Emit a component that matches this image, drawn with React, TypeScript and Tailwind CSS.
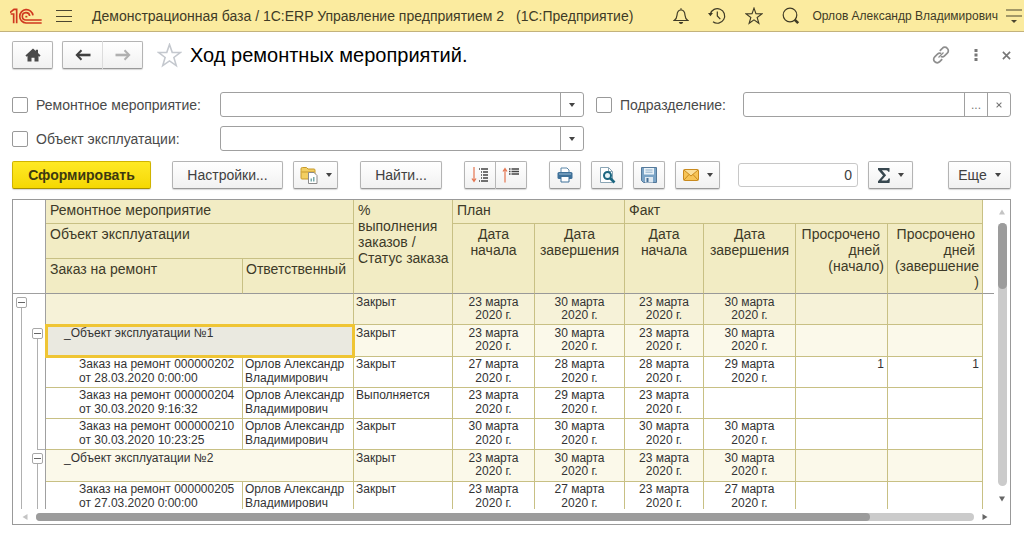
import type { ReactNode } from 'react';
import clsx from 'clsx';

type Level = 'total' | 'object' | 'order';

interface ReportRow {
  id: string;
  level: Level;
  title: string[];
  owner?: string[];
  status: string;
  dates: string[];
  overdue?: string;
  selected?: boolean;
  lastInGroup?: boolean;
}

const OWNER = ['Орлов Александр', 'Владимирович'];

const ROWS: ReportRow[] = [
  {
    id: 'total',
    level: 'total',
    title: [],
    status: 'Закрыт',
    dates: ['23 марта', '30 марта', '23 марта', '30 марта'],
  },
  {
    id: 'object-1',
    level: 'object',
    title: ['_Объект эксплуатации №1'],
    status: 'Закрыт',
    dates: ['23 марта', '30 марта', '23 марта', '30 марта'],
    selected: true,
  },
  {
    id: 'order-202',
    level: 'order',
    title: ['Заказ на ремонт 000000202', 'от 28.03.2020 0:00:00'],
    owner: OWNER,
    status: 'Закрыт',
    dates: ['27 марта', '28 марта', '28 марта', '29 марта'],
    overdue: '1',
  },
  {
    id: 'order-204',
    level: 'order',
    title: ['Заказ на ремонт 000000204', 'от 30.03.2020 9:16:32'],
    owner: OWNER,
    status: 'Выполняется',
    dates: ['23 марта', '29 марта', '23 марта', ''],
  },
  {
    id: 'order-210',
    level: 'order',
    title: ['Заказ на ремонт 000000210', 'от 30.03.2020 10:23:25'],
    owner: OWNER,
    status: 'Закрыт',
    dates: ['30 марта', '30 марта', '30 марта', '30 марта'],
    lastInGroup: true,
  },
  {
    id: 'object-2',
    level: 'object',
    title: ['_Объект эксплуатации №2'],
    status: 'Закрыт',
    dates: ['23 марта', '30 марта', '23 марта', '30 марта'],
  },
  {
    id: 'order-205',
    level: 'order',
    title: ['Заказ на ремонт 000000205', 'от 27.03.2020 0:00:00'],
    owner: OWNER,
    status: 'Закрыт',
    dates: ['23 марта', '27 марта', '23 марта', '27 марта'],
  },
];

const ROW_BG: Record<Level, string> = {
  total: 'bg-[#f6f2d8]',
  object: 'bg-[#fbf9ea]',
  order: 'bg-white',
};

/* ---------- icons ---------- */

function Logo() {
  return (
    <svg viewBox="0 0 96 48" className="h-4 w-8" fill="none" stroke="#d0391f" strokeWidth="5">
      <path d="M0 14 12 4h8v42" />
      <path d="M2 18h9v28" />
      <path d="M69 22A20 20 0 1 0 48 45H95" />
      <path d="M59 24A11 11 0 1 0 48 36H95" />
      <path d="M46 26h6" />
    </svg>
  );
}

function MenuIcon() {
  return (
    <svg viewBox="0 0 16 14" className="h-[14px] w-4" stroke="#4b4630" strokeWidth="1">
      <path d="M0 1.5h16M0 7.5h16M0 12.5h16" />
    </svg>
  );
}

function BellIcon() {
  return (
    <svg viewBox="0 0 16 18" className="h-[18px] w-4" fill="none" stroke="#3f3b26" strokeWidth="1.2">
      <path d="M8 1.2v1.6M1.2 13.5c2-1.4 2.6-2.6 2.8-5.3C4.2 4.8 5.6 3 8 3s3.8 1.8 4 5.2c.2 2.7.8 3.9 2.8 5.3z" />
      <path d="M5.8 15h4.4c-.3 1.3-1.2 2-2.2 2s-1.9-.7-2.2-2z" fill="#3f3b26" stroke="none" />
    </svg>
  );
}

function HistoryIcon() {
  return (
    <svg viewBox="0 0 18 18" className="size-[18px]" fill="none" stroke="#3f3b26" strokeWidth="1.2">
      <path d="M2.3 7A7.3 7.3 0 1 1 5 14.8" />
      <path d="M9.3 4.5V9l3 3.2" />
      <path d="M0 6h5L2.4 9.3z" fill="#3f3b26" stroke="none" />
    </svg>
  );
}

function StarIcon({ className, stroke }: { className: string; stroke: string }) {
  return (
    <svg viewBox="0 0 24 24" className={className} fill="none" stroke={stroke} strokeWidth="1.5">
      <path d="M12 1.5l2.6 7.5 8 .1-6.4 4.8 2.3 7.8L12 17.2l-6.5 4.5 2.3-7.8L1.4 9.1l8-.1z" />
    </svg>
  );
}

function SearchIcon() {
  return (
    <svg viewBox="0 0 18 18" className="size-[18px]" fill="none" stroke="#3f3b26">
      <circle cx="8" cy="8" r="6.8" strokeWidth="1.2" />
      <path d="M12.6 12.6l3.6 3.6" strokeWidth="2.6" />
    </svg>
  );
}

function PanelIcon() {
  return (
    <svg viewBox="0 0 16 16" className="size-4" stroke="#4b4630" fill="#4b4630">
      <path d="M0 2h16M0 8h16" strokeWidth="1.2" />
      <path d="M5 12h6l-3 3z" stroke="none" />
    </svg>
  );
}

function HomeIcon() {
  return (
    <svg viewBox="0 0 16 14" className="h-[14px] w-4" fill="#4a4a4a">
      <path d="M8 .5.4 7.4l1.3 1.3.8-.7v5.5h4V9.8h3v3.7h4V8l.8.700 1.300-1.300L13 5V1.800h-2.200V3z" />
    </svg>
  );
}

function ArrowIcon({ className }: { className?: string }) {
  return (
    <svg viewBox="0 0 16 12" className={clsx('h-3 w-4', className)} fill="none" stroke="currentColor">
      <path d="M2 6h13.5" strokeWidth="2.6" />
      <path d="M6.5 1.2 1.8 6l4.7 4.8" strokeWidth="2" />
    </svg>
  );
}

function LinkIcon() {
  return (
    <svg viewBox="0 0 18 18" className="size-[18px]" fill="none" stroke="#8e8e8e" strokeWidth="1.7">
      <path d="M7.8 4.8 10.300 2.300a3.400 3.400 0 0 1 5 0 3.400 3.400 0 0 1 0 4.900l-2.800 2.700a3.400 3.400 0 0 1-3.700.6" />
      <path d="M10.200 13.200l-2.500 2.500a3.400 3.400 0 0 1-5 0 3.400 3.400 0 0 1 0-4.900l2.800-2.700a3.400 3.400 0 0 1 3.700-.6" />
      <path d="M6.5 11.5l5-5" strokeWidth="1.3" />
    </svg>
  );
}

function DotsIcon() {
  return (
    <svg viewBox="0 0 4 12" className="h-3 w-1" fill="#777">
      <path d="M.5 0h3v3h-3zM.5 4.5h3v3h-3zM.5 9h3v3h-3z" />
    </svg>
  );
}

function CrossIcon({ className }: { className: string }) {
  return (
    <svg viewBox="0 0 10 10" className={className} stroke="#777" strokeWidth="1.8">
      <path d="M1 1l8 8M9 1 1 9" />
    </svg>
  );
}

function Caret() {
  return (
    <svg viewBox="0 0 6 4" className="h-1 w-[6px]" fill="#444">
      <path d="M0 0h6L3 4z" />
    </svg>
  );
}

function VariantsIcon() {
  return (
    <svg viewBox="0 0 18 18" className="size-[18px]">
      <path d="M1 4.5V2.8Q1 1.5 2.5 1.5h4L8 3h6q1 0 1 1v9H2q-1 0-1-1z" fill="#f3cf62" stroke="#c79a2c" />
      <path d="M1.5 6h13" stroke="#c79a2c" />
      <path d="M8.5 6.5h5.5l3 3v8H8.5z" fill="#fff" stroke="#8b8b8b" />
      <path d="M10.5 15.5v-3H12v3zM13 15.5V11h1.5v4.5z" fill="#7aa" />
    </svg>
  );
}

function ExpandIcon() {
  return (
    <svg viewBox="0 0 18 16" className="h-4 w-[18px]" fill="none">
      <path d="M3 0v14M1 11.5 3 14.5l2-3" stroke="#e4744f" strokeWidth="1.2" />
      <path d="M8 2h1M10 2h7M10 5h1M12 5h5M10 8h1M12 8h5M10 11h1M12 11h5M8 14h1M10 14h7" stroke="#444" strokeWidth="1.5" />
    </svg>
  );
}

function CollapseIcon() {
  return (
    <svg viewBox="0 0 18 16" className="h-4 w-[18px]" fill="none">
      <path d="M3 15.5v-14M1 4.5 3 1.5l2 3" stroke="#e4744f" strokeWidth="1.2" />
      <path d="M7 2h1.5M9.5 2H17M7 4.500h1.500M9.500 4.500H17M7 7h1.500M9.500 7H17" stroke="#444" strokeWidth="1.5" />
    </svg>
  );
}

function PrinterIcon() {
  return (
    <svg viewBox="0 0 18 16" className="h-4 w-[18px]">
      <path d="M5 5V1h6l2 2v2" fill="#fff" stroke="#5b86a8" />
      <rect x="1.5" y="5" width="15" height="7" rx="1.5" fill="#3f7199" />
      <path d="M3 7h12" stroke="#9bbdd6" />
      <path d="M5 9.5h8V15H5z" fill="#fff" stroke="#3f7199" />
    </svg>
  );
}

function PreviewIcon() {
  return (
    <svg viewBox="0 0 18 18" className="size-[18px]" fill="none">
      <path d="M2.5 1.5h8l4 4v11h-12z" fill="#fff" stroke="#8aa5b5" />
      <path d="M10.5 1.5v4h4" stroke="#8aa5b5" />
      <circle cx="9.5" cy="9.5" r="3.5" fill="#e6f3f7" stroke="#1a6580" strokeWidth="2" />
      <path d="M12 12l4.5 4.5" stroke="#1a6580" strokeWidth="2.6" />
    </svg>
  );
}

function SaveIcon() {
  return (
    <svg viewBox="0 0 16 16" className="size-4">
      <path d="M.5.5h15v15h-13l-2-2z" fill="#7ba4c6" stroke="#54799a" />
      <path d="M3 1h10v6.5H3z" fill="#eaf2f8" />
      <path d="M4.5 3h7M4.5 5.2h7" stroke="#8fb0ca" />
      <path d="M4 10h8v5.5H4z" fill="#dfe9f1" />
      <path d="M5.5 11h2v4h-2z" fill="#466f94" />
    </svg>
  );
}

function MailIcon() {
  return (
    <svg viewBox="0 0 16 12" className="h-3 w-4" fill="none" stroke="#c98a1e">
      <rect x=".5" y=".5" width="15" height="11" rx="1" fill="#f7c456" />
      <path d="M1 1l7 6 7-6" fill="#fbdf9a" />
      <path d="M1 11l5-5.5M15 11l-5-5.5" />
    </svg>
  );
}

function SigmaIcon() {
  return (
    <svg viewBox="0 0 12 15" className="h-[15px] w-3" fill="#37474f">
      <path d="M0 0h11.5v3.8h-1.3Q10 2.2 8.3 2.2H3.9l4.2 5-4.6 5.300h5q1.600 0 2-1.900H12L11.500 15H0v-1.700l5-5.700L0 1.700z" />
    </svg>
  );
}

function ScrollArrow({ className, d }: { className: string; d: string }) {
  return (
    <svg viewBox="0 0 6 6" className={clsx('size-[6px] shrink-0', className)} fill="currentColor">
      <path d={d} />
    </svg>
  );
}

/* ---------- controls ---------- */

function ToolButton({
  label,
  className,
  children,
}: {
  label?: string;
  className?: string;
  children: ReactNode;
}) {
  return (
    <button
      type="button"
      aria-label={label}
      className={clsx(
        'flex h-7 shrink-0 items-center justify-center gap-2 rounded-[2px] border border-[#b4b4b4] border-b-[#999] bg-linear-to-b from-white to-[#f1f1f1] text-sm text-[#404040] shadow-[0_1px_1px_#d8d8d8]',
        className,
      )}
    >
      {children}
    </button>
  );
}

function FilterLabel({ id, className, children }: { id: string; className?: string; children: ReactNode }) {
  return (
    <div className={clsx('flex items-center gap-2', className)}>
      <input
        id={id}
        type="checkbox"
        className="size-4 shrink-0 appearance-none rounded-[2px] border border-[#999] bg-white"
      />
      <label htmlFor={id} className="text-sm whitespace-nowrap text-[#4a4a4a]">
        {children}
      </label>
    </div>
  );
}

function FilterField({ label, children }: { label: string; children: ReactNode }) {
  return (
    <div className="flex h-[25px] min-w-0 overflow-hidden rounded-[3px] border border-[#a0a0a0] bg-white">
      <input type="text" aria-label={label} className="min-w-0 flex-1 px-2 text-sm outline-none" />
      {children}
    </div>
  );
}

function FieldButton({ label, children }: { label: string; children: ReactNode }) {
  return (
    <button
      type="button"
      aria-label={label}
      className="flex w-[23px] shrink-0 items-center justify-center border-l border-[#a0a0a0] text-xs text-[#777]"
    >
      {children}
    </button>
  );
}

/* ---------- report table ---------- */

function Toggle() {
  return (
    <button
      type="button"
      aria-label="Свернуть"
      className="flex size-[11px] shrink-0 items-center justify-center rounded-[2px] border border-[#a8a8a8] bg-white"
    >
      <span className="h-px w-[7px] bg-[#666]" />
    </button>
  );
}

function TreeCell({ level, last }: { level: Level; last?: boolean }) {
  return (
    <td className="border-r border-[#a0a0a0] bg-white p-0">
      <div className={clsx('flex', level === 'object' ? 'h-8' : 'h-[31px]')}>
        <div className="flex w-4 flex-col items-center">
          {level === 'total' && <div className="h-[3px]" />}
          {level === 'total' && <Toggle />}
          <div className="w-px flex-1 bg-[#b0b0b0]" />
        </div>
        <div className="flex w-4 flex-col items-center">
          {level === 'object' && <div className="h-[3px]" />}
          {level === 'object' && <Toggle />}
          {level !== 'total' && <div className="w-px flex-1 bg-[#b0b0b0]" />}
          {last && <div className="ml-2 h-px w-2 bg-[#b0b0b0]" />}
        </div>
      </div>
    </td>
  );
}

function Lines({ items }: { items: string[] }) {
  return (
    <>
      {items.map((line) => (
        <div key={line} className="whitespace-nowrap">
          {line}
        </div>
      ))}
    </>
  );
}

const CELL = 'border-r border-b border-[#c8c084] align-top';
const HEAD = 'border-r border-b bg-[#f2ecc4] pt-[2px] align-top font-normal';
const HEAD_INNER = 'border-[#c8c084]';
const HEAD_LAST = 'border-r-[#c8c084] border-b-[#999]';

function ReportHead() {
  return (
    <thead className="text-sm leading-4 text-[#3d3a28]">
      <tr className="h-6">
        <td rowSpan={3} className="border-r border-b border-[#a0a0a0] bg-white" />
        <th colSpan={2} className={clsx(HEAD, HEAD_INNER, 'pl-1 text-left')}>
          Ремонтное мероприятие
        </th>
        <th rowSpan={3} className={clsx(HEAD, HEAD_LAST, 'pl-1 text-left')}>
          %<br />
          выполнения
          <br />
          заказов /
          <br />
          <span className="whitespace-nowrap">Статус заказа</span>
        </th>
        <th colSpan={2} className={clsx(HEAD, HEAD_INNER, 'pl-1 text-left')}>
          План
        </th>
        <th colSpan={4} className={clsx(HEAD, HEAD_INNER, 'pl-1 text-left')}>
          Факт
        </th>
        <td rowSpan={3} className="border-b border-[#999]" />
      </tr>
      <tr className="h-[35px]">
        <th colSpan={2} className={clsx(HEAD, HEAD_INNER, 'pl-1 text-left')}>
          Объект эксплуатации
        </th>
        {['начала', 'завершения', 'начала', 'завершения'].map((name, i) => (
          <th key={i} rowSpan={2} className={clsx(HEAD, HEAD_LAST, 'text-center')}>
            Дата
            <br />
            {name}
          </th>
        ))}
        <th rowSpan={2} className={clsx(HEAD, HEAD_LAST, 'pr-[3px] text-right')}>
          Просрочено&nbsp;
          <br />
          дней&nbsp;
          <br />
          (начало)
        </th>
        <th rowSpan={2} className={clsx(HEAD, HEAD_LAST, 'pr-[3px] text-right')}>
          Просрочено&nbsp;
          <br />
          дней&nbsp;
          <br />
          (завершение
          <br />)
        </th>
      </tr>
      <tr className="h-[35px]">
        <th className={clsx(HEAD, HEAD_LAST, 'pl-1 text-left')}>Заказ на ремонт</th>
        <th className={clsx(HEAD, HEAD_LAST, 'pl-[3px] text-left')}>Ответственный</th>
      </tr>
    </thead>
  );
}

function ReportLine({ row }: { row: ReportRow }) {
  const isOrder = row.level === 'order';
  const cell = clsx(CELL, ROW_BG[row.level]);

  return (
    <tr className={clsx('text-xs text-[#333]', isOrder ? 'leading-[14px]' : 'leading-[13px]')}>
      <TreeCell level={row.level} last={row.lastInGroup} />
      <td
        colSpan={isOrder ? 1 : 2}
        className={clsx(
          CELL,
          isOrder ? 'pl-[33px]' : 'pt-[2px] pl-[18px]',
          row.selected
            ? 'bg-[#eae9e0] outline-3 -outline-offset-2 outline-[#efc534]'
            : ROW_BG[row.level],
        )}
      >
        <Lines items={row.title} />
      </td>
      {isOrder && (
        <td className={clsx(cell, 'pl-[2px]')}>
          <Lines items={row.owner ?? []} />
        </td>
      )}
      <td className={clsx(cell, 'pl-[2px]', !isOrder && 'pt-[2px]')}>{row.status}</td>
      {row.dates.map((date, i) => (
        <td key={i} className={clsx(cell, 'text-center', !isOrder && 'pt-[2px]')}>
          {date && <Lines items={[date, '2020 г.']} />}
        </td>
      ))}
      <td className={clsx(cell, 'pr-[3px] text-right')}>{row.overdue}</td>
      <td className={clsx(cell, 'pr-[3px] text-right')}>{row.overdue}</td>
      <td />
    </tr>
  );
}

function Report() {
  return (
    <main className="mt-[10px] mb-[11px] flex min-h-0 flex-1 flex-col border border-[#999]">
      <div className="flex min-h-0 flex-1">
        <div className="min-w-0 flex-1 overflow-hidden">
          <table className="w-full min-w-[981px] table-fixed border-separate border-spacing-0">
            <colgroup>
              <col className="w-[33px]" />
              <col />
              <col className="w-[111px]" />
              <col className="w-[99px]" />
              <col className="w-[82px]" />
              <col className="w-[90px]" />
              <col className="w-[79px]" />
              <col className="w-[92px]" />
              <col className="w-[92px]" />
              <col className="w-[95px]" />
              <col className="w-[11px]" />
            </colgroup>
            <ReportHead />
            <tbody>
              {ROWS.map((row) => (
                <ReportLine key={row.id} row={row} />
              ))}
            </tbody>
          </table>
        </div>
        {/* vertical scrollbar */}
        <div className="flex w-4 flex-col items-center justify-between pt-[9px] pb-[7px]">
          <ScrollArrow className="text-[#c4c4c4]" d="M3 .5 6 5.5H0z" />
          <div className="mt-2 mb-[10px] w-[9px] flex-1 rounded-full bg-[#cbcbcb]">
            <div className="h-1/4 rounded-full bg-[#9c9c9c]" />
          </div>
          <ScrollArrow className="text-[#666]" d="M0 .5h6L3 5.5z" />
        </div>
      </div>
      {/* horizontal scrollbar */}
      <div className="flex h-[15px] items-center pr-[22px] pl-[9px]">
        <ScrollArrow className="text-[#c4c4c4]" d="M5.5 0v6L.5 3z" />
        <div className="mx-2 h-2 flex-1 rounded-full bg-[#cbcbcb]">
          <div className="h-2 w-8/9 rounded-full bg-[#9c9c9c]" />
        </div>
        <ScrollArrow className="text-[#666]" d="M.5 0v6l5-3z" />
      </div>
    </main>
  );
}

/* ---------- page ---------- */

function AppHeader() {
  return (
    <header className="flex h-8 shrink-0 items-center border-b border-[#c3b27c] bg-[#fbeb9f] pr-[2px] pl-[10px] text-sm text-[#3f3b26]">
      <Logo />
      <button type="button" aria-label="Меню" className="ml-[14px]">
        <MenuIcon />
      </button>
      <div className="ml-5 flex gap-3 whitespace-nowrap">
        <span>Демонстрационная база / 1С:ERP Управление предприятием 2</span>
        <span>(1С:Предприятие)</span>
      </div>
      <div className="ml-auto flex shrink-0 items-center gap-[19px]">
        <button type="button" aria-label="Уведомления">
          <BellIcon />
        </button>
        <button type="button" aria-label="История">
          <HistoryIcon />
        </button>
        <button type="button" aria-label="Избранное">
          <StarIcon className="size-[18px]" stroke="#3f3b26" />
        </button>
        <button type="button" aria-label="Поиск">
          <SearchIcon />
        </button>
      </div>
      <a href="#user" className="ml-3 text-xs whitespace-nowrap">
        Орлов Александр Владимирович
      </a>
      <button type="button" aria-label="Сервис" className="ml-2">
        <PanelIcon />
      </button>
    </header>
  );
}

function TitleBar() {
  return (
    <div className="mt-[9px] flex items-center">
      <ToolButton label="Начальная страница" className="w-[41px]">
        <HomeIcon />
      </ToolButton>
      <div className="ml-[9px] flex">
        <ToolButton label="Назад" className="w-[41px] rounded-r-none border-r-[#ddd]">
          <ArrowIcon />
        </ToolButton>
        <ToolButton label="Вперед" className="w-10 rounded-l-none border-l-0 text-[#b0b0b0]">
          <ArrowIcon className="-scale-x-100" />
        </ToolButton>
      </div>
      <button type="button" aria-label="В избранное" className="ml-[14px]">
        <StarIcon className="size-[25px]" stroke="#c4c8ce" />
      </button>
      <h1 className="ml-2 text-xl whitespace-nowrap text-black">Ход ремонтных мероприятий.</h1>
      <div className="ml-auto flex items-center">
        <button type="button" aria-label="Ссылка">
          <LinkIcon />
        </button>
        <button type="button" aria-label="Действия" className="ml-6">
          <DotsIcon />
        </button>
        <button type="button" aria-label="Закрыть" className="ml-6">
          <CrossIcon className="size-[9px]" />
        </button>
      </div>
    </div>
  );
}

function Filters() {
  return (
    <div className="mt-[23px] grid grid-cols-[208px_minmax(0,364fr)_159px_minmax(0,268fr)] gap-y-[9px]">
      <FilterLabel id="event">Ремонтное мероприятие:</FilterLabel>
      <FilterField label="Ремонтное мероприятие">
        <FieldButton label="Выбрать из списка">
          <Caret />
        </FieldButton>
      </FilterField>
      <FilterLabel id="department" className="pl-3">
        Подразделение:
      </FilterLabel>
      <FilterField label="Подразделение">
        <FieldButton label="Выбрать">...</FieldButton>
        <FieldButton label="Очистить">
          <CrossIcon className="size-[6px]" />
        </FieldButton>
      </FilterField>
      <FilterLabel id="object">Объект эксплуатации:</FilterLabel>
      <FilterField label="Объект эксплуатации">
        <FieldButton label="Выбрать из списка">
          <Caret />
        </FieldButton>
      </FilterField>
    </div>
  );
}

function Toolbar() {
  return (
    <div className="mt-[10px] flex items-center gap-[10px]">
      <button
        type="button"
        className="h-7 w-[139px] shrink-0 rounded-[2px] border border-[#d0b400] border-b-[#a89000] bg-linear-to-b from-[#ffe923] to-[#f5d800] text-sm font-bold text-[#3d3a10] shadow-[0_1px_1px_#d8d8d8]"
      >
        Сформировать
      </button>
      <ToolButton className="ml-[11px] w-[111px]">Настройки...</ToolButton>
      <ToolButton label="Варианты отчета" className="w-[45px]">
        <VariantsIcon />
        <Caret />
      </ToolButton>
      <ToolButton className="ml-3 w-[82px]">Найти...</ToolButton>
      <div className="ml-3 flex">
        <ToolButton label="Развернуть группы" className="w-8 rounded-r-none">
          <ExpandIcon />
        </ToolButton>
        <ToolButton label="Свернуть группы" className="w-[31px] rounded-l-none border-l-0">
          <CollapseIcon />
        </ToolButton>
      </div>
      <ToolButton label="Печать" className="ml-3 w-8">
        <PrinterIcon />
      </ToolButton>
      <ToolButton label="Просмотр" className="w-8">
        <PreviewIcon />
      </ToolButton>
      <ToolButton label="Сохранить" className="w-8">
        <SaveIcon />
      </ToolButton>
      <ToolButton label="Отправить" className="w-[45px]">
        <MailIcon />
        <Caret />
      </ToolButton>
      <input
        type="text"
        aria-label="Сумма"
        defaultValue="0"
        className="ml-2 h-6 w-[120px] rounded-[3px] border border-[#c8c8c8] px-[5px] text-right text-sm text-[#404040]"
      />
      <ToolButton label="Показатели" className="w-[45px]">
        <SigmaIcon />
        <Caret />
      </ToolButton>
      <ToolButton className="ml-auto w-[63px]">
        Еще
        <Caret />
      </ToolButton>
    </div>
  );
}

export default function App() {
  return (
    <div className="flex h-screen flex-col bg-white font-['Liberation_Sans',Arial,sans-serif]">
      <AppHeader />
      <div className="flex min-h-0 flex-1 flex-col pr-[13px] pl-3">
        <TitleBar />
        <Filters />
        <Toolbar />
        <Report />
      </div>
    </div>
  );
}
